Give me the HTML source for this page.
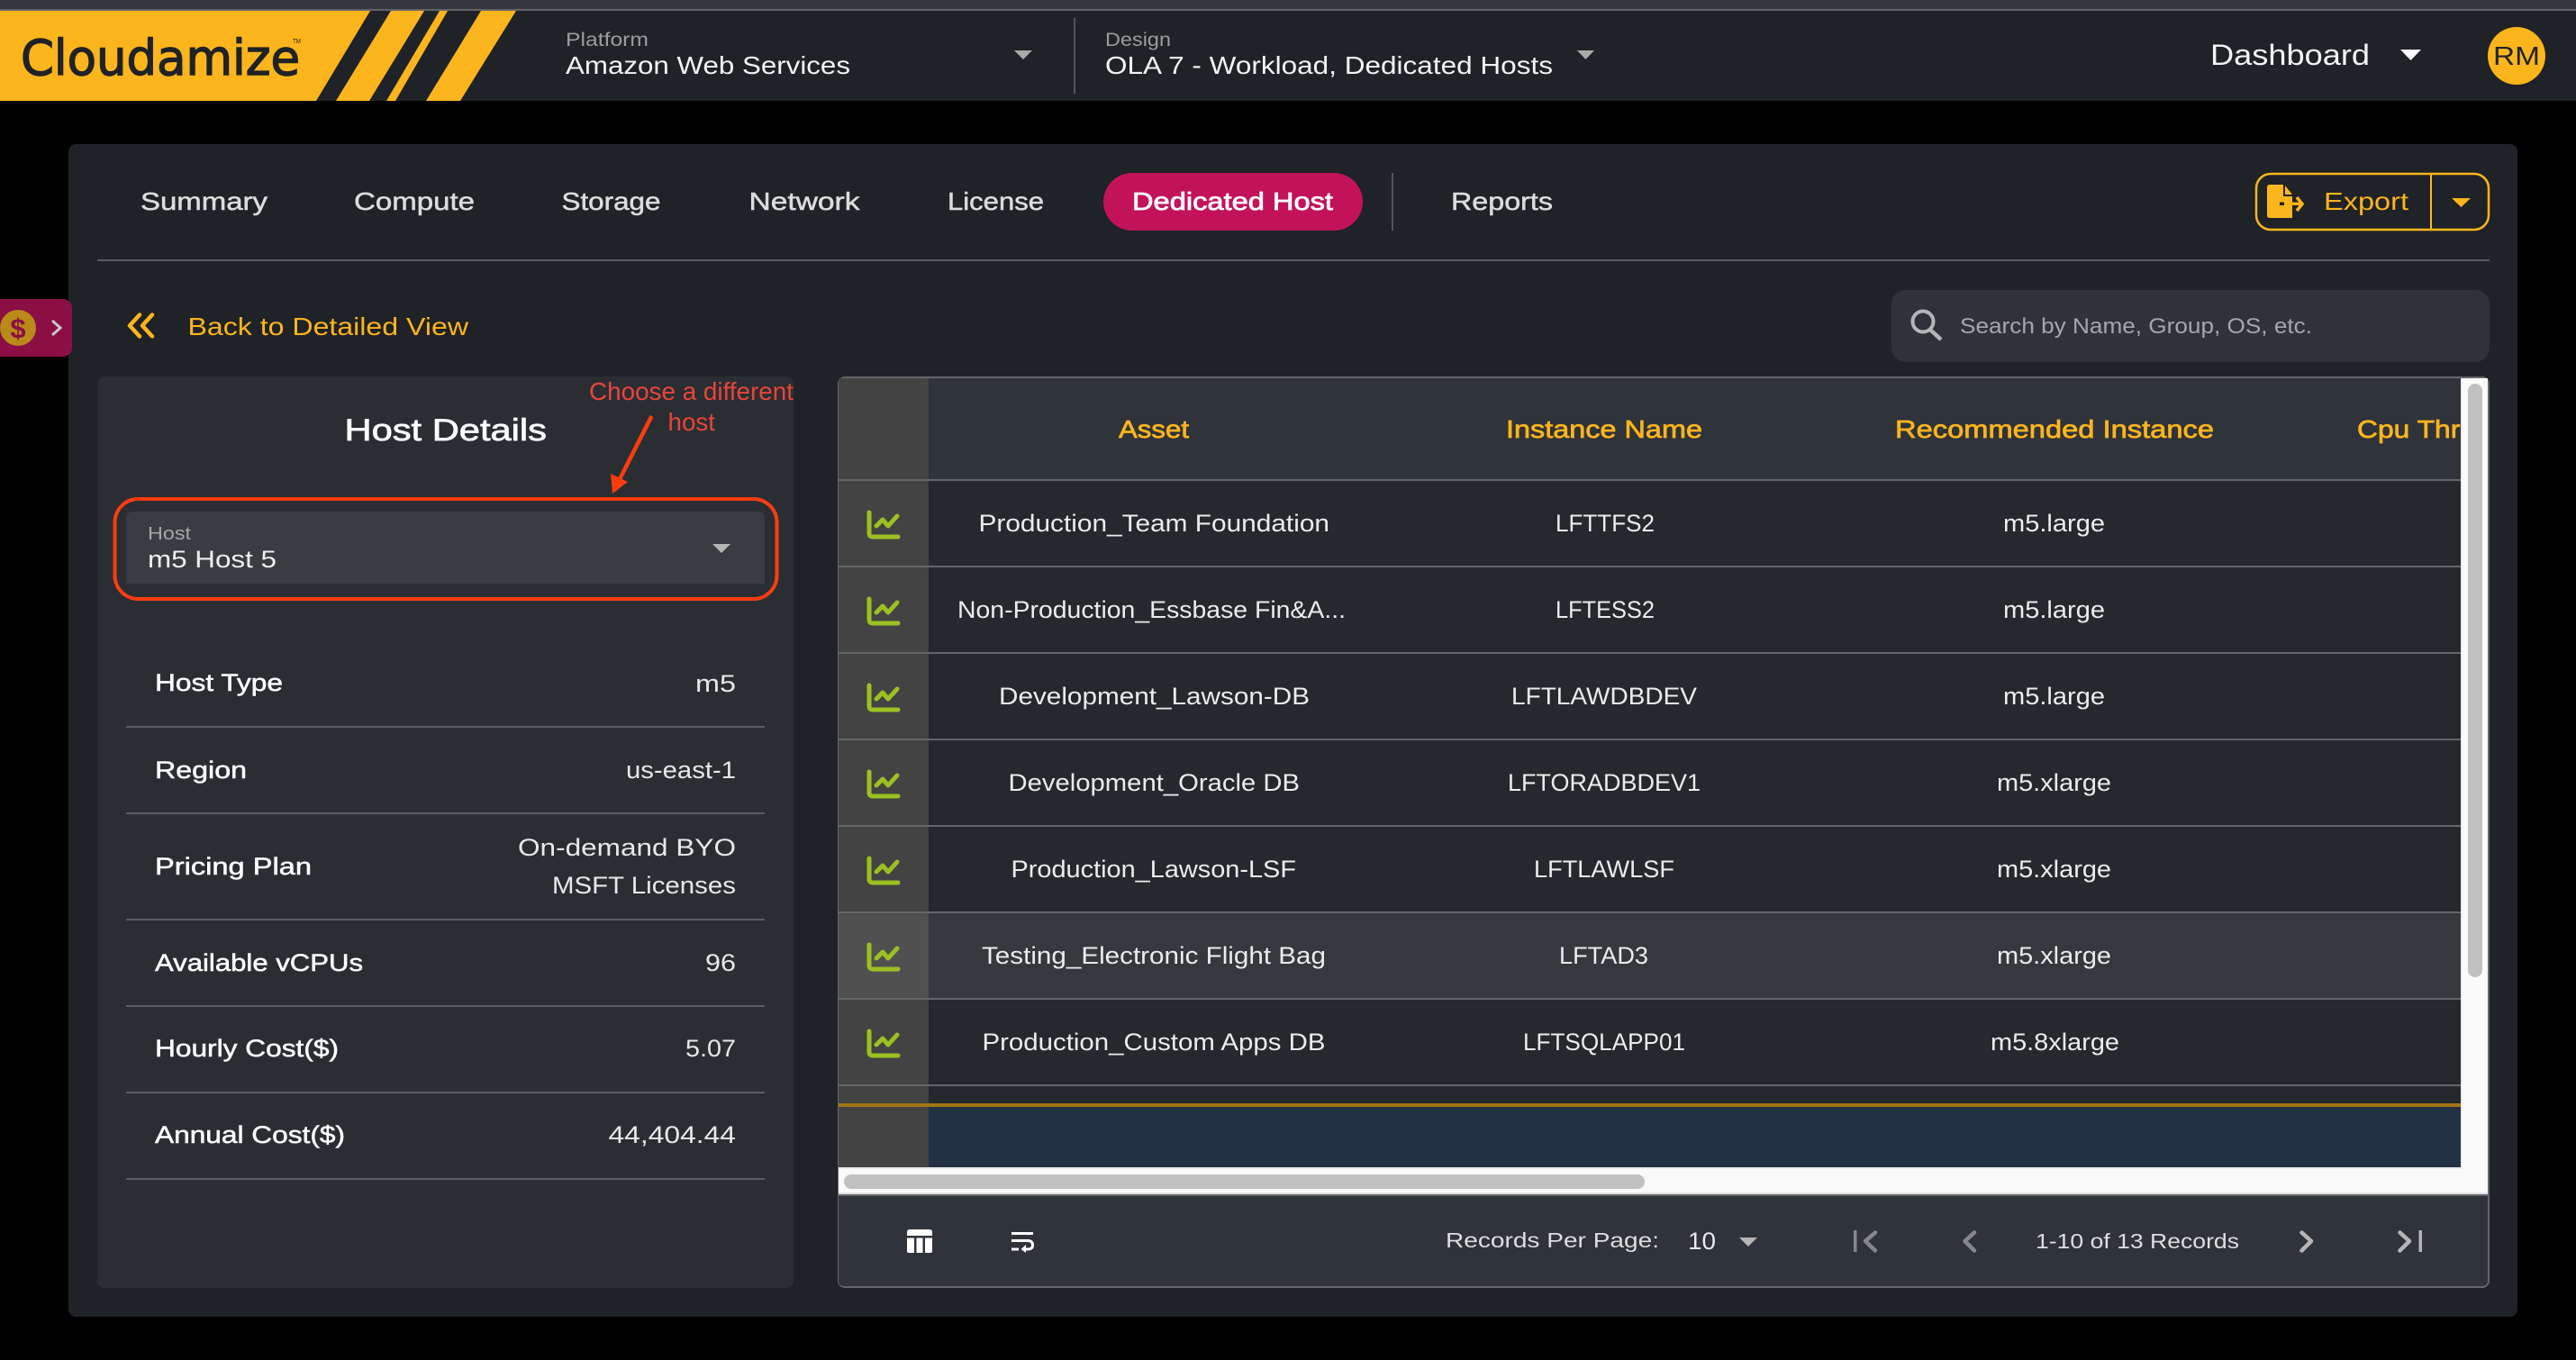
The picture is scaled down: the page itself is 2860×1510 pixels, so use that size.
<!DOCTYPE html>
<html lang="en">
<head>
<meta charset="utf-8">
<title>Cloudamize - Dedicated Host</title>
<style>
html,body{margin:0;padding:0;background:#000;width:2860px;height:1510px;overflow:hidden}
svg{display:block}
text{font-family:"Liberation Sans",Arial,sans-serif;fill:#f0f0f0;white-space:pre}
.tab{font-size:27.5px;fill:#dcdcdc;stroke:#dcdcdc;stroke-width:.5px}
.hd{font-size:27.5px;fill:#fdb51d;stroke:#fdb51d;stroke-width:.7px}
.cell{font-size:26.5px;fill:#ececec}
.lab{font-size:26.5px;fill:#fff;stroke:#fff;stroke-width:.5px}
.val{font-size:26.5px;fill:#e8e8e8}
.sm{font-size:21px;fill:#9c9c9e}
.big{font-size:27.5px;fill:#f4f4f4}
.pg{font-size:23.5px;fill:#dedede}
.ann{font-size:28px;fill:#e9443a}
.chart{fill:none;stroke:#9bc021;stroke-width:5;stroke-linecap:round;stroke-linejoin:round}
.nav{fill:none;stroke-width:4.5;stroke-linecap:round;stroke-linejoin:round}
</style>
</head>
<body>
<svg xmlns="http://www.w3.org/2000/svg" width="2860" height="1510" viewBox="0 0 2860 1510">
<defs>
<g id="ch"><path class="chart" d="M965 569V592Q965 596 969 596H997"/><path class="chart" d="M973 584L980 577L986 584L996 573"/></g>
</defs>
<rect width="2860" height="1510" fill="#000"/>

<!-- browser strip / header -->
<rect width="2860" height="10" fill="#36373c"/>
<rect y="10" width="2860" height="2" fill="#636468"/>
<rect y="12" width="2860" height="100" fill="#1f2226"/>
<polygon points="0,12 411,12 351,112 0,112" fill="#fdb51d"/>
<polygon points="434,12 471,12 410,112 373,112" fill="#fdb51d"/>
<polygon points="488,12 497,12 439,112 429,112" fill="#fdb51d"/>
<polygon points="534,12 573,12 511,112 473,112" fill="#fdb51d"/>
<text x="23" y="83" font-size="54" textLength="310" lengthAdjust="spacingAndGlyphs" style="font-family:'DejaVu Sans',sans-serif;fill:#1f2226;stroke:#1f2226;stroke-width:1.4px">Cloudamize</text>
<text x="325" y="48" font-size="7" textLength="9" lengthAdjust="spacingAndGlyphs" style="fill:#1f2226">TM</text>

<text class="sm" x="628" y="51" textLength="92" lengthAdjust="spacingAndGlyphs">Platform</text>
<text class="big" x="628" y="82" textLength="316" lengthAdjust="spacingAndGlyphs">Amazon Web Services</text>
<polygon points="1126,56 1146,56 1136,66" fill="#aaa"/>
<rect x="1192" y="20" width="2" height="84" fill="#55575b"/>
<text class="sm" x="1227" y="51" textLength="73" lengthAdjust="spacingAndGlyphs">Design</text>
<text class="big" x="1227" y="82" textLength="497" lengthAdjust="spacingAndGlyphs">OLA 7 - Workload, Dedicated Hosts</text>
<polygon points="1751,56 1770,56 1760.500,66" fill="#aaa"/>
<text x="2454" y="72" font-size="32" textLength="177" lengthAdjust="spacingAndGlyphs" style="fill:#f4f4f4">Dashboard</text>
<polygon points="2665,55 2688,55 2676.500,67" fill="#fff"/>
<circle cx="2794" cy="62" r="32" fill="#fdb51d"/>
<text x="2768" y="72" font-size="29" textLength="52" lengthAdjust="spacingAndGlyphs" style="fill:#1f2226">RM</text>

<!-- main panel -->
<rect x="76" y="160" width="2719" height="1302" rx="8" fill="#1f2226"/>

<!-- tabs -->
<text class="tab" x="156" y="233" textLength="141" lengthAdjust="spacingAndGlyphs">Summary</text>
<text class="tab" x="393" y="233" textLength="134" lengthAdjust="spacingAndGlyphs">Compute</text>
<text class="tab" x="623.500" y="233" textLength="110" lengthAdjust="spacingAndGlyphs">Storage</text>
<text class="tab" x="831.500" y="233" textLength="123" lengthAdjust="spacingAndGlyphs">Network</text>
<text class="tab" x="1052" y="233" textLength="107" lengthAdjust="spacingAndGlyphs">License</text>
<rect x="1225" y="192" width="288" height="64" rx="32" fill="#c2135a"/>
<text class="tab" x="1257" y="233" textLength="223" lengthAdjust="spacingAndGlyphs" style="fill:#fff;stroke:#fff;stroke-width:.7px">Dedicated Host</text>
<rect x="1545" y="192" width="2" height="64" fill="#55575b"/>
<text class="tab" x="1611" y="233" textLength="113" lengthAdjust="spacingAndGlyphs">Reports</text>

<!-- export -->
<rect x="2505" y="193" width="258" height="62" rx="16" fill="none" stroke="#fdb51d" stroke-width="2.500"/>
<rect x="2698" y="193" width="2" height="62" fill="#fdb51d"/>
<path d="M2520 205H2535V218H2545V242H2520Q2517 242 2517 239V208Q2517 205 2520 205Z" fill="#fdb51d"/>
<polygon points="2537,206 2545,216 2537,216" fill="#fdb51d"/>
<rect x="2531" y="224.500" width="16" height="3.500" fill="#1f2226"/>
<rect x="2536" y="224.500" width="18" height="3.500" fill="#fdb51d"/>
<path d="M2550 219L2556 226.500L2550 234" fill="none" stroke="#fdb51d" stroke-width="3.500"/>
<text x="2580" y="233" font-size="27.5" textLength="94" lengthAdjust="spacingAndGlyphs" style="fill:#fdb51d">Export</text>
<polygon points="2722,220 2743,220 2732.500,230" fill="#fdb51d"/>

<rect x="108" y="288" width="2656" height="2" fill="#5a5c60"/>

<!-- side tab -->
<rect x="-12" y="332" width="92" height="64" rx="10" fill="#8b0e45"/>
<circle cx="20" cy="364" r="20" fill="#b98a17"/>
<text x="20" y="375" font-size="31" text-anchor="middle" style="fill:#8b0e45;font-weight:bold">$</text>
<path d="M58 356L67 364L58 372" fill="none" stroke="#c8c8c8" stroke-width="3"/>

<!-- back -->
<path d="M155 349.500L144 361.500L155 373.500M169 349.500L158 361.500L169 373.500" fill="none" stroke="#fdb51d" stroke-width="4.500" stroke-linecap="round" stroke-linejoin="round"/>
<text x="208.500" y="372" font-size="28" textLength="311.500" lengthAdjust="spacingAndGlyphs" style="fill:#fdb51d">Back to Detailed View</text>

<!-- search -->
<rect x="2100" y="322" width="664" height="80" rx="16" fill="#2f3339"/>
<circle cx="2135" cy="357" r="11.500" fill="none" stroke="#b5b5b5" stroke-width="4"/>
<path d="M2143 366L2155 377" stroke="#b5b5b5" stroke-width="4.500" fill="none"/>
<text x="2176" y="370" font-size="24" textLength="391" lengthAdjust="spacingAndGlyphs" style="fill:#a4a6a9">Search by Name, Group, OS, etc.</text>

<!-- left panel -->
<rect x="108" y="418" width="773" height="1012" rx="8" fill="#2a2e32"/>
<text x="382.500" y="489" font-size="34" textLength="224.500" lengthAdjust="spacingAndGlyphs" style="fill:#fff;stroke:#fff;stroke-width:.7px">Host Details</text>
<text class="ann" x="654" y="444" textLength="227" lengthAdjust="spacingAndGlyphs">Choose a different</text>
<text class="ann" x="741.500" y="478" textLength="52.500" lengthAdjust="spacingAndGlyphs">host</text>
<line x1="723.500" y1="462" x2="688" y2="532" stroke="#fb3c0f" stroke-width="4.500"/>
<polygon points="680,548 678,526 697,535" fill="#fb3c0f"/>
<rect x="127.500" y="554" width="735" height="111" rx="26" fill="none" stroke="#fb3c0f" stroke-width="4"/>
<path d="M148 568H841Q849 568 849 576V648H140V576Q140 568 148 568Z" fill="#393d41"/>
<text x="164" y="599" font-size="20.500" textLength="48" lengthAdjust="spacingAndGlyphs" style="fill:#a4a6a8">Host</text>
<text x="164" y="630" font-size="27" textLength="143" lengthAdjust="spacingAndGlyphs" style="fill:#f0f0f0">m5 Host 5</text>
<polygon points="791,604 811,604 801,614" fill="#b5b5b5"/>

<text class="lab" x="172" y="767" textLength="142" lengthAdjust="spacingAndGlyphs">Host Type</text>
<text class="val" x="772" y="768" textLength="45" lengthAdjust="spacingAndGlyphs">m5</text>
<rect x="140" y="806" width="709" height="2" fill="#5a5c60"/>
<text class="lab" x="172" y="864" textLength="102" lengthAdjust="spacingAndGlyphs">Region</text>
<text class="val" x="695" y="864" textLength="122" lengthAdjust="spacingAndGlyphs">us-east-1</text>
<rect x="140" y="902" width="709" height="2" fill="#5a5c60"/>
<text class="lab" x="172" y="971" textLength="174" lengthAdjust="spacingAndGlyphs">Pricing Plan</text>
<text class="val" x="575" y="950" textLength="242" lengthAdjust="spacingAndGlyphs">On-demand BYO</text>
<text class="val" x="613" y="992" textLength="204" lengthAdjust="spacingAndGlyphs">MSFT Licenses</text>
<rect x="140" y="1020" width="709" height="2" fill="#5a5c60"/>
<text class="lab" x="172" y="1078" textLength="231" lengthAdjust="spacingAndGlyphs">Available vCPUs</text>
<text class="val" x="783" y="1078" textLength="34" lengthAdjust="spacingAndGlyphs">96</text>
<rect x="140" y="1116" width="709" height="2" fill="#5a5c60"/>
<text class="lab" x="172" y="1173" textLength="204" lengthAdjust="spacingAndGlyphs">Hourly Cost($)</text>
<text class="val" x="761" y="1173" textLength="56" lengthAdjust="spacingAndGlyphs">5.07</text>
<rect x="140" y="1212" width="709" height="2" fill="#5a5c60"/>
<text class="lab" x="172" y="1269" textLength="211" lengthAdjust="spacingAndGlyphs">Annual Cost($)</text>
<text class="val" x="675.500" y="1269" textLength="141.500" lengthAdjust="spacingAndGlyphs">44,404.44</text>
<rect x="140" y="1308" width="709" height="2" fill="#5a5c60"/>

<!-- table -->
<rect x="930" y="418" width="1834" height="1012" rx="8" fill="#64666a"/>
<rect x="931" y="420" width="1801" height="113" fill="#2f333a"/>
<rect x="931" y="533" width="1801" height="763" fill="#25282c"/>
<rect x="931" y="1014" width="1801" height="95" fill="#35383d"/>
<rect x="931" y="420" width="100" height="876" fill="#434343"/>
<rect x="931" y="1014" width="100" height="95" fill="#505050"/>
<rect x="1031" y="1229" width="1701" height="67" fill="#233144"/>
<rect x="931" y="1225" width="1801" height="4" fill="#a37514"/>
<g fill="#64666a">
<rect x="931" y="532" width="1801" height="2"/>
<rect x="931" y="628" width="1801" height="2"/>
<rect x="931" y="724" width="1801" height="2"/>
<rect x="931" y="820" width="1801" height="2"/>
<rect x="931" y="916" width="1801" height="2"/>
<rect x="931" y="1012" width="1801" height="2"/>
<rect x="931" y="1108" width="1801" height="2"/>
<rect x="931" y="1204" width="1801" height="2"/>
</g>

<text class="hd" x="1242" y="486" textLength="78" lengthAdjust="spacingAndGlyphs">Asset</text>
<text class="hd" x="1672" y="486" textLength="218" lengthAdjust="spacingAndGlyphs">Instance Name</text>
<text class="hd" x="2104" y="486" textLength="354" lengthAdjust="spacingAndGlyphs">Recommended Instance</text>
<text class="hd" x="2617" y="486" textLength="132" lengthAdjust="spacingAndGlyphs">Cpu Thre</text>

<use href="#ch"/>
<use href="#ch" y="96"/>
<use href="#ch" y="192"/>
<use href="#ch" y="288"/>
<use href="#ch" y="384"/>
<use href="#ch" y="480"/>
<use href="#ch" y="576"/>

<text class="cell" x="1086.500" y="590" textLength="389.500" lengthAdjust="spacingAndGlyphs">Production_Team Foundation</text>
<text class="cell" x="1727" y="590" textLength="110" lengthAdjust="spacingAndGlyphs">LFTTFS2</text>
<text class="cell" x="2224" y="590" textLength="113" lengthAdjust="spacingAndGlyphs">m5.large</text>

<text class="cell" x="1063" y="686" textLength="431" lengthAdjust="spacingAndGlyphs">Non-Production_Essbase Fin&amp;A...</text>
<text class="cell" x="1727" y="686" textLength="110" lengthAdjust="spacingAndGlyphs">LFTESS2</text>
<text class="cell" x="2224" y="686" textLength="113" lengthAdjust="spacingAndGlyphs">m5.large</text>

<text class="cell" x="1109" y="782" textLength="345" lengthAdjust="spacingAndGlyphs">Development_Lawson-DB</text>
<text class="cell" x="1678" y="782" textLength="206" lengthAdjust="spacingAndGlyphs">LFTLAWDBDEV</text>
<text class="cell" x="2224" y="782" textLength="113" lengthAdjust="spacingAndGlyphs">m5.large</text>

<text class="cell" x="1119.500" y="878" textLength="323.500" lengthAdjust="spacingAndGlyphs">Development_Oracle DB</text>
<text class="cell" x="1674" y="878" textLength="214" lengthAdjust="spacingAndGlyphs">LFTORADBDEV1</text>
<text class="cell" x="2217" y="878" textLength="127" lengthAdjust="spacingAndGlyphs">m5.xlarge</text>

<text class="cell" x="1122.500" y="974" textLength="316.500" lengthAdjust="spacingAndGlyphs">Production_Lawson-LSF</text>
<text class="cell" x="1703" y="974" textLength="156" lengthAdjust="spacingAndGlyphs">LFTLAWLSF</text>
<text class="cell" x="2217" y="974" textLength="127" lengthAdjust="spacingAndGlyphs">m5.xlarge</text>

<text class="cell" x="1090" y="1070" textLength="382" lengthAdjust="spacingAndGlyphs">Testing_Electronic Flight Bag</text>
<text class="cell" x="1731" y="1070" textLength="99" lengthAdjust="spacingAndGlyphs">LFTAD3</text>
<text class="cell" x="2217" y="1070" textLength="127" lengthAdjust="spacingAndGlyphs">m5.xlarge</text>

<text class="cell" x="1090.500" y="1166" textLength="381" lengthAdjust="spacingAndGlyphs">Production_Custom Apps DB</text>
<text class="cell" x="1691" y="1166" textLength="180" lengthAdjust="spacingAndGlyphs">LFTSQLAPP01</text>
<text class="cell" x="2210" y="1166" textLength="143" lengthAdjust="spacingAndGlyphs">m5.8xlarge</text>

<!-- scrollbars -->
<rect x="2732" y="420" width="30" height="876" fill="#fafafa"/>
<rect x="2732" y="420" width="2" height="878" fill="#ececec"/>
<rect x="2740" y="426" width="16" height="659" rx="8" fill="#c1c1c1"/>
<rect x="931" y="1296" width="1831" height="30" fill="#fafafa"/>
<rect x="931" y="1296" width="1803" height="2" fill="#ececec"/>
<rect x="931" y="1324" width="1831" height="2" fill="#e4e4e4"/>
<rect x="937" y="1304" width="889" height="16" rx="8" fill="#c1c1c1"/>

<!-- footer -->
<path d="M931 1328H2762V1422Q2762 1428 2756 1428H937Q931 1428 931 1422Z" fill="#2f333a"/>
<path d="M1010 1365H1032Q1035 1365 1035 1368V1372H1007V1368Q1007 1365 1010 1365Z" fill="#fff"/>
<path d="M1007 1374.500H1015V1391H1009Q1007 1391 1007 1389ZM1017.500 1374.500H1024.500V1391H1017.500ZM1027 1374.500H1035V1389Q1035 1391 1033 1391H1027Z" fill="#fff"/>
<rect x="1123" y="1368" width="24" height="3" fill="#fff"/>
<path d="M1123 1377.500H1141Q1146.500 1377.500 1146.500 1382.500Q1146.500 1387 1141 1387H1136" fill="none" stroke="#fff" stroke-width="3"/>
<path d="M1139 1382L1133.500 1387L1139 1391Z" fill="#fff"/>
<rect x="1123" y="1385.500" width="8" height="3" fill="#fff"/>
<text class="pg" x="1605" y="1385" textLength="237" lengthAdjust="spacingAndGlyphs">Records Per Page:</text>
<text x="1874" y="1387" font-size="27" textLength="31" lengthAdjust="spacingAndGlyphs" style="fill:#e8e8e8">10</text>
<polygon points="1931,1374 1951,1374 1941,1384" fill="#b5b5b5"/>
<rect x="2058" y="1366" width="3.500" height="24" fill="#858688"/>
<path class="nav" d="M2082 1368.500L2071 1378L2082 1388.500" stroke="#858688"/>
<path class="nav" d="M2192 1368.500L2181.500 1378L2192 1388.500" stroke="#858688"/>
<text class="pg" x="2260" y="1386" textLength="226" lengthAdjust="spacingAndGlyphs">1-10 of 13 Records</text>
<path class="nav" d="M2555.500 1368.500L2566 1378L2555.500 1388.500" stroke="#b5b5b5"/>
<path class="nav" d="M2664.500 1368.500L2675 1378L2664.500 1388.500" stroke="#b5b5b5"/>
<rect x="2685.500" y="1366" width="3.500" height="24" fill="#b5b5b5"/>
</svg>
</body>
</html>
